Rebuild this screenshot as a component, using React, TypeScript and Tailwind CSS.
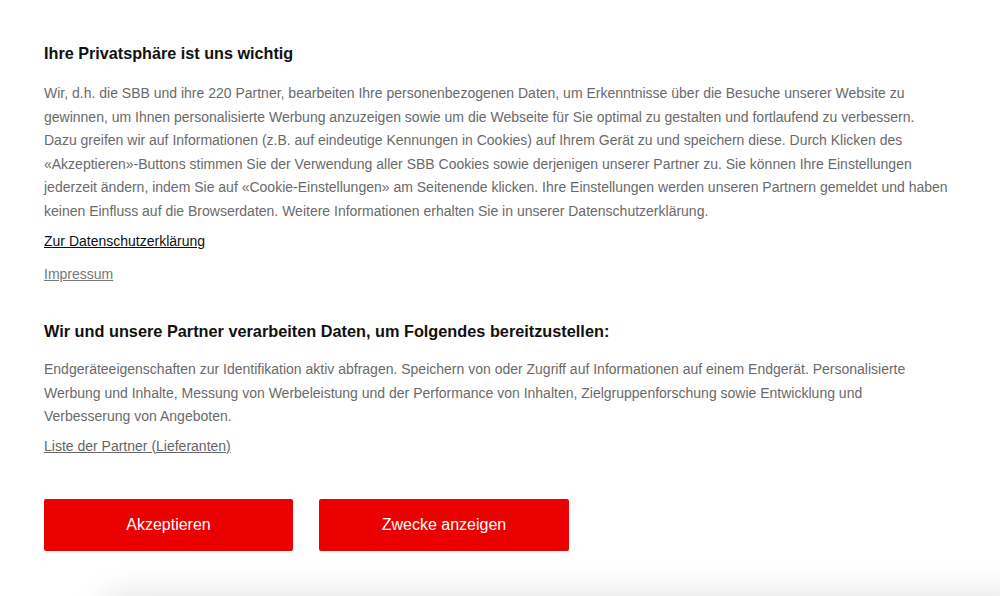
import React from "react";

export default function App() {
  return (
    <div
      className="relative w-[1000px] h-[596px] overflow-hidden bg-white"
      style={{ fontFamily: '"Liberation Sans", Arial, Helvetica, sans-serif' }}
    >
      <div className="w-[905px] ml-[44px] pt-[43px]">
        <h1 className="text-[16.2px] leading-[20px] font-bold text-[#111]">
          Ihre Privatsphäre ist uns wichtig
        </h1>
        <p className="mt-[19px] text-[14px] leading-[23.5px] text-[#6a6a6a]">
          Wir, d.h. die SBB und ihre 220 Partner, bearbeiten Ihre personenbezogenen Daten, um Erkenntnisse über die Besuche unserer Website zu gewinnen, um Ihnen personalisierte Werbung anzuzeigen sowie um die Webseite für Sie optimal zu gestalten und fortlaufend zu verbessern. Dazu greifen wir auf Informationen (z.B. auf eindeutige Kennungen in Cookies) auf Ihrem Gerät zu und speichern diese. Durch Klicken des «Akzeptieren»-Buttons stimmen Sie der Verwendung aller SBB Cookies sowie derjenigen unserer Partner zu. Sie können Ihre Einstellungen jederzeit ändern, indem Sie auf «Cookie-Einstellungen» am Seitenende klicken. Ihre Einstellungen werden unseren Partnern gemeldet und haben keinen Einfluss auf die Browserdaten. Weitere Informationen erhalten Sie in unserer Datenschutzerklärung.
        </p>
        <div className="mt-[8px] text-[14px] leading-[20px]">
          <a className="underline text-[#111]">Zur Datenschutzerklärung</a>
        </div>
        <div className="mt-[13px] text-[14px] leading-[20px]">
          <a className="underline text-[#777]">Impressum</a>
        </div>
        <h2 className="mt-[37px] text-[16.3px] leading-[20px] font-bold text-[#111]">
          Wir und unsere Partner verarbeiten Daten, um Folgendes bereitzustellen:
        </h2>
        <p className="mt-[17px] text-[14px] leading-[23.5px] text-[#6a6a6a]">
          Endgeräteeigenschaften zur Identifikation aktiv abfragen. Speichern von oder Zugriff auf Informationen auf einem Endgerät. Personalisierte Werbung und Inhalte, Messung von Werbeleistung und der Performance von Inhalten, Zielgruppenforschung sowie Entwicklung und Verbesserung von Angeboten.
        </p>
        <div className="mt-[7px] text-[14px] leading-[20px]">
          <a className="underline text-[#666]">Liste der Partner (Lieferanten)</a>
        </div>
        <div className="mt-[43px] flex gap-[26px]">
          <button className="w-[249px] h-[52px] rounded-[2px] bg-[#eb0000] text-white text-[16px]">
            Akzeptieren
          </button>
          <button className="w-[250px] h-[52px] rounded-[2px] bg-[#eb0000] text-white text-[16px]">
            Zwecke anzeigen
          </button>
        </div>
      </div>
      <div className="absolute left-[100px] right-[-40px] bottom-[-50px] h-[50px] rounded-[30px] bg-white shadow-[0_0_34px_rgba(0,0,0,0.13)]" />
    </div>
  );
}
